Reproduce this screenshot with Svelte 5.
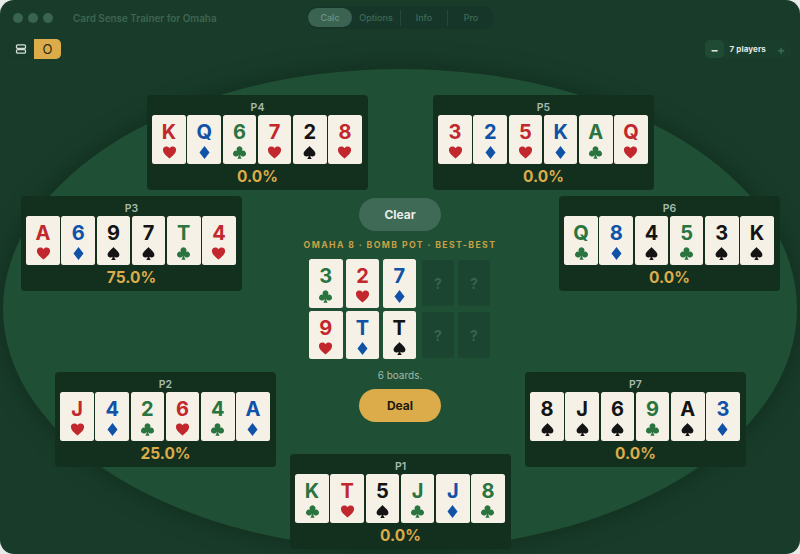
<script>
  const seats = [
    { id: 'P4', pct: '0.0%', pos: 'p4', cards: ['Kh','Qd','6c','7h','2s','8h'] },
    { id: 'P5', pct: '0.0%', pos: 'p5', cards: ['3h','2d','5h','Kd','Ac','Qh'] },
    { id: 'P3', pct: '75.0%', pos: 'p3', cards: ['Ah','6d','9s','7s','Tc','4h'] },
    { id: 'P6', pct: '0.0%', pos: 'p6', cards: ['Qc','8d','4s','5c','3s','Ks'] },
    { id: 'P2', pct: '25.0%', pos: 'p2', cards: ['Jh','4d','2c','6h','4c','Ad'] },
    { id: 'P7', pct: '0.0%', pos: 'p7', cards: ['8s','Js','6s','9c','As','3d'] },
    { id: 'P1', pct: '0.0%', pos: 'p1', cards: ['Kc','Th','5s','Jc','Jd','8c'] }
  ];
  const board = ['3c','2h','7d','9h','Td','Ts'];
  const suitPaths = {
    h: 'M12 21.5C5 16 1.5 12.4 1.5 8A5.6 5.6 0 0 1 7 2.4c2.1 0 3.9 1 5 2.9 1.1-1.9 2.9-2.9 5-2.9A5.6 5.6 0 0 1 22.500 8c0 4.400-3.500 8-10.500 13.500z',
    d: 'M12 1.500 20 12l-8 10.500L4 12z',
    c: 'M12 2a4.700 4.700 0 0 1 4 7.200 4.700 4.700 0 1 1-2.700 6.300c.1 2.700.8 4.700 2.300 6.500H8.400c1.500-1.800 2.200-3.800 2.300-6.500A4.700 4.700 0 1 1 8 9.200 4.700 4.700 0 0 1 12 2z',
    s: 'M12 1.500c3 4 9.500 7.700 9.500 12.300a4.900 4.900 0 0 1-8.100 3.500c.2 2.100.9 3.700 2.400 5.200H8.200c1.500-1.500 2.200-3.100 2.400-5.200a4.900 4.900 0 0 1-8.100-3.500C2.500 9.200 9 5.500 12 1.500z'
  };
</script>

{#snippet card(code)}
  <div class="card {code[1]}">
    <span class="rank">{code[0]}</span>
    <svg class="suit" viewBox="0 0 24 24" aria-hidden="true"><path d={suitPaths[code[1]]} fill="currentColor" /></svg>
  </div>
{/snippet}

<div class="window">
  <div class="felt"></div>

  <header class="titlebar">
    <div class="lights"><i></i><i></i><i></i></div>
    <div class="title">Card Sense Trainer for Omaha</div>
    <nav class="tabs">
      <span class="tab active">Calc</span>
      <span class="tab options">Options</span>
      <span class="tab info">Info</span>
      <span class="tab pro">Pro</span>
    </nav>
  </header>

  <div class="toolbar">
    <div class="modes">
      <span class="mode-icon">
        <svg viewBox="0 0 12 10" width="12" height="10" aria-hidden="true">
          <rect x="1.500" y="0.800" width="9" height="3.600" rx="1.200" fill="none" stroke="#d4ddd7" stroke-width="1.300" />
          <rect x="1.500" y="5.600" width="9" height="3.600" rx="1.200" fill="none" stroke="#d4ddd7" stroke-width="1.300" />
        </svg>
      </span>
      <span class="mode-o">O</span>
    </div>
    <div class="stepper">
      <span class="step minus">−</span>
      <span class="count">7 players</span>
      <span class="step plus">+</span>
    </div>
  </div>

  {#each seats as s}
    <section class="seat {s.pos}">
      <div class="name">{s.id}</div>
      <div class="hand">
        {#each s.cards as c}{@render card(c)}{/each}
      </div>
      <div class="pct">{s.pct}</div>
    </section>
  {/each}

  <div class="center">
    <button class="pill clear">Clear</button>
    <div class="label">OMAHA 8 · BOMB POT · BEST-BEST</div>
    <div class="board">
      <div class="board-cards">
        {#each board as c}{@render card(c)}{/each}
      </div>
      <div class="board-empty">
        {#each [0,1,2,3] as _}<div class="slot">?</div>{/each}
      </div>
    </div>
    <div class="boards">6 boards.</div>
    <button class="pill deal">Deal</button>
  </div>
</div>

<style>
  :global(body) {
    margin: 0;
    background: #e8ebe9;
  }
  .window {
    position: relative;
    width: 800px;
    height: 554px;
    overflow: hidden;
    border-radius: 14px;
    background: #193c2a;
    font-family: Inter, "Liberation Sans", sans-serif;
  }
  .felt {
    position: absolute;
    left: 3px;
    top: 69px;
    width: 794px;
    height: 480px;
    border-radius: 50%;
    background: #1f4f35;
    box-shadow: 0 0 24px 2px rgba(8, 28, 16, 0.45);
  }
  .titlebar {
    position: relative;
    height: 35px;
    display: flex;
    align-items: center;
  }
  .lights {
    display: flex;
    gap: 5px;
    margin-left: 13px;
  }
  .lights i {
    width: 10px;
    height: 10px;
    border-radius: 50%;
    background: #386450;
  }
  .title {
    margin-left: 20px;
    font-size: 9.900px;
    font-weight: 600;
    color: #3d6550;
    white-space: nowrap;
  }
  .tabs {
    position: absolute;
    left: 307px;
    top: 6px;
    width: 187px;
    height: 23px;
    display: flex;
    align-items: center;
    border-radius: 12px;
    background: #16362a;
    font-size: 9px;
    font-weight: 500;
    color: #3f6a54;
    box-sizing: border-box;
    padding-left: 1px;
  }
  .tab {
    display: flex;
    align-items: center;
    justify-content: center;
    height: 16px;
    text-align: center;
  }
  .tab.active {
    width: 44px;
    height: 19px;
    border-radius: 10px;
    background: #3a6352;
    color: #6f9483;
  }
  .tab.options {
    width: 48px;
    border-right: 1px solid #22493a;
  }
  .tab.info {
    width: 46px;
    border-right: 1px solid #22493a;
  }
  .tab.pro {
    width: 46px;
  }
  .toolbar {
    position: relative;
    display: flex;
    justify-content: space-between;
    align-items: center;
    height: 20px;
    margin-top: 4px;
    padding: 0 8px;
  }
  .modes {
    display: flex;
    height: 20px;
  }
  .mode-icon {
    width: 26px;
    display: flex;
    align-items: center;
    justify-content: center;
    border-radius: 5px 0 0 5px;
    background: #173a2a;
  }
  .mode-o {
    width: 27px;
    display: flex;
    align-items: center;
    justify-content: center;
    border-radius: 0 5px 5px 0;
    background: #dcab4a;
    color: #2a2a18;
    font-size: 13px;
  }
  .stepper {
    display: flex;
    align-items: center;
    height: 18px;
    border-radius: 5px;
    background: #1a3e2c;
    margin-right: 1.500px;
  }
  .step {
    width: 19px;
    height: 18px;
    display: flex;
    align-items: center;
    justify-content: center;
    font-size: 12px;
    font-weight: 700;
    border-radius: 5px;
  }
  .minus {
    background: #1f4a34;
    color: #dfe6e1;
  }
  .plus {
    color: #3a6a50;
  }
  .count {
    width: 47.500px;
    text-align: center;
    font-size: 8px;
    font-weight: 700;
    letter-spacing: 0.100px;
    color: #e3e8e4;
    white-space: nowrap;
  }
  .seat {
    position: absolute;
    width: 221px;
    height: 95px;
    box-sizing: border-box;
    border-radius: 4px;
    background: #13301f;
    display: flex;
    flex-direction: column;
    align-items: center;
    padding-top: 6px;
  }
  .p4 { left: 147px; top: 95px; }
  .p5 { left: 433px; top: 95px; }
  .p3 { left: 21px; top: 196px; }
  .p6 { left: 559px; top: 196px; }
  .p2 { left: 55px; top: 372px; }
  .p7 { left: 525px; top: 372px; }
  .p1 { left: 290px; top: 454px; }
  .name {
    height: 14px;
    line-height: 13px;
    font-size: 10.500px;
    font-weight: 600;
    color: #a5bbae;
  }
  .hand {
    display: flex;
    gap: 1.700px;
    margin-right: 1px;
  }
  .pct {
    margin-top: 3px;
    font-size: 15.500px;
    line-height: 20px;
    font-weight: 700;
    color: #dcab4a;
  }
  .card {
    width: 33.500px;
    height: 48.700px;
    box-sizing: border-box;
    border-radius: 2.500px;
    background: #f5f1e6;
    display: flex;
    flex-direction: column;
    align-items: center;
    padding-top: 5px;
  }
  .card.h { color: #c2272d; }
  .card.d { color: #0f52a8; }
  .card.c { color: #2a7440; }
  .card.s { color: #141414; }
  .rank {
    font-size: 20px;
    line-height: 24px;
    font-weight: 700;
  }
  .suit {
    width: 15px;
    height: 15px;
    margin-top: 1px;
  }
  .center {
    position: absolute;
    left: 300px;
    top: 198px;
    width: 200px;
    display: flex;
    flex-direction: column;
    align-items: center;
  }
  .pill {
    width: 82px;
    height: 33px;
    border: 0;
    border-radius: 17px;
    font-family: inherit;
    font-size: 12px;
    font-weight: 700;
    padding: 0;
  }
  .clear {
    background: #3f6a55;
    color: #e8ede9;
  }
  .deal {
    background: #dcab4a;
    color: #1c1a0e;
    margin-top: 7px;
  }
  .label {
    margin-top: 7px;
    height: 14px;
    line-height: 14px;
    font-size: 8.700px;
    font-weight: 700;
    letter-spacing: 1.400px;
    color: #c9a045;
    white-space: nowrap;
  }
  .board {
    margin-top: 7px;
    margin-right: 1px;
    width: 181px;
    display: flex;
    justify-content: space-between;
    align-items: center;
  }
  .board-cards {
    width: 107px;
    display: grid;
    grid-template-columns: repeat(3, 33.500px);
    justify-content: space-between;
    row-gap: 3px;
  }
  .board-empty {
    display: grid;
    grid-template-columns: repeat(2, 32px);
    column-gap: 4px;
    row-gap: 6px;
  }
  .slot {
    height: 46px;
    border-radius: 3px;
    background: #1b4530;
    color: #37644d;
    display: flex;
    align-items: center;
    justify-content: center;
    font-size: 14px;
    font-weight: 700;
  }
  .boards {
    margin-top: 9px;
    height: 14px;
    line-height: 14px;
    font-size: 10px;
    color: #9fbcaa;
  }
</style>
